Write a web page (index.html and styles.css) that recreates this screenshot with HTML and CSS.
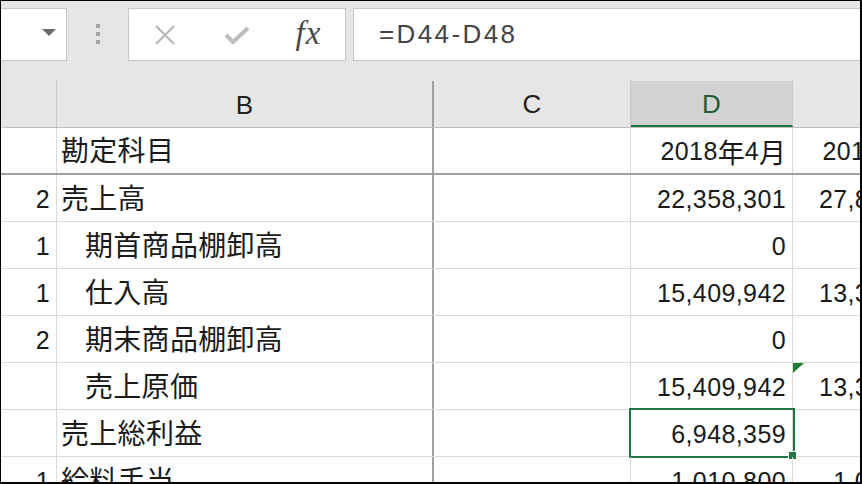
FILE: index.html
```html
<!DOCTYPE html>
<html lang="ja">
<head>
  <meta charset="UTF-8" />
  <title>売上総利益</title>
  <link rel="stylesheet" href="styles.css">
</head>
<body>

<div class="frame">
  <div class="toolbar">
    <div class="namebox"><span class="caret"></span></div>
    <div class="grip"><i></i><i></i><i></i></div>
    <div class="fxbox">
      <span class="fx-btn">
        <svg width="22" height="20" viewBox="0 0 22 20">
          <path d="M2 1 L20 19 M20 1 L2 19" stroke="#b4b4b4" stroke-width="2" fill="none"/>
        </svg>
      </span>
      <span class="fx-btn">
        <svg width="26" height="18" viewBox="0 0 26 18">
          <path d="M2 9 L9 16 L24 2" stroke="#bdbdbd" stroke-width="4" fill="none"/>
        </svg>
      </span>
      <span class="fx-btn fx-label">fx</span>
    </div>
    <div class="formula">=D44-D48</div>
  </div>

  <div class="sheet">
    <div class="row head">
      <div class="cell"></div>
      <div class="cell">B</div>
      <div class="cell">C</div>
      <div class="cell active">D</div>
      <div class="cell"></div>
    </div>

    <div class="row first">
      <div class="cell num"></div>
      <div class="cell label">勘定科目</div>
      <div class="cell"></div>
      <div class="cell num">2018<span class="kj">年</span>4<span class="kj">月</span></div>
      <div class="cell num">2018<span class="kj">年</span>5<span class="kj">月</span></div>
    </div>

    <div class="row">
      <div class="cell num">2</div>
      <div class="cell label">売上高</div>
      <div class="cell"></div>
      <div class="cell num">22,358,301</div>
      <div class="cell num">27,853,120</div>
    </div>

    <div class="row">
      <div class="cell num">1</div>
      <div class="cell label indent">期首商品棚卸高</div>
      <div class="cell"></div>
      <div class="cell num">0</div>
      <div class="cell num">0</div>
    </div>

    <div class="row">
      <div class="cell num">1</div>
      <div class="cell label indent">仕入高</div>
      <div class="cell"></div>
      <div class="cell num">15,409,942</div>
      <div class="cell num">13,316,508</div>
    </div>

    <div class="row">
      <div class="cell num">2</div>
      <div class="cell label indent">期末商品棚卸高</div>
      <div class="cell"></div>
      <div class="cell num">0</div>
      <div class="cell num">0</div>
    </div>

    <div class="row">
      <div class="cell num"></div>
      <div class="cell label indent">売上原価</div>
      <div class="cell"></div>
      <div class="cell num">15,409,942</div>
      <div class="cell num"><span class="warn"></span>13,316,508</div>
    </div>

    <div class="row">
      <div class="cell num"></div>
      <div class="cell label">売上総利益</div>
      <div class="cell"></div>
      <div class="cell num selected">6,948,359<span class="sel"><span class="handle"></span></span></div>
      <div class="cell num">0</div>
    </div>

    <div class="row">
      <div class="cell num">1</div>
      <div class="cell label">給料手当</div>
      <div class="cell"></div>
      <div class="cell num">1,010,800</div>
      <div class="cell num">1,010,800</div>
    </div>
  </div>
</div>

</body>
</html>
```

FILE: styles.css
```css
* { box-sizing: border-box; }

html, body {
  margin: 0;
  padding: 0;
  background: #000;
}

.frame {
  width: 862px;
  height: 484px;
  border-style: solid;
  border-color: #000;
  border-width: 1px 2px 2px 1px;
  background: #fff;
  overflow: hidden;
}

/* formula bar */
.toolbar {
  display: flex;
  align-items: flex-start;
  height: 79px;
  padding-top: 7px;
  background: #e6e6e6;
  font-family: "Liberation Sans", Arial, sans-serif;
}

.namebox {
  display: flex;
  align-items: center;
  justify-content: flex-end;
  width: 66px;
  height: 53px;
  padding-right: 10px;
  background: #fff;
  border: 1px solid #c6c6c6;
  border-left: none;
}

.caret {
  width: 0;
  height: 0;
  margin-top: -4px;
  border-left: 7px solid transparent;
  border-right: 7px solid transparent;
  border-top: 7px solid #6b6b6b;
}

.grip {
  display: flex;
  flex-direction: column;
  gap: 4px;
  margin: 16px 0 0 29px;
}

.grip i {
  display: block;
  width: 4px;
  height: 4px;
  background: #a6a6a6;
}

.fxbox {
  display: flex;
  width: 218px;
  height: 53px;
  margin-left: 28px;
  background: #fff;
  border: 1px solid #c6c6c6;
}

.fx-btn {
  display: flex;
  align-items: center;
  justify-content: center;
  width: 72px;
}

.fx-label {
  width: 71px;
  padding-bottom: 2px;
  font-family: "Liberation Serif", "Times New Roman", serif;
  font-style: italic;
  font-size: 33px;
  letter-spacing: 1px;
  color: #4a4a4a;
}

.formula {
  flex: 1;
  display: flex;
  align-items: center;
  height: 53px;
  margin-left: 7px;
  margin-right: -20px;
  padding-left: 25px;
  padding-bottom: 1px;
  background: #fff;
  border: 1px solid #c6c6c6;
  font-size: 26px;
  letter-spacing: 2.4px;
  color: #444;
}

/* grid */
.row {
  display: grid;
  grid-template-columns: 56px 377px 197px 162px 162px;
  height: 47px;
  border-bottom: 1px solid #dadada;
}

.cell {
  display: flex;
  align-items: center;
  position: relative;
  border-right: 1px solid #dadada;
  color: #1a1a1a;
  white-space: nowrap;
}

.cell:nth-child(2) {
  border-right: 2px solid #a0a0a0;
}

.row.head {
  height: 48px;
  background: #e6e6e6;
  border-bottom: 1px solid #bfbfbf;
}

.row.head .cell {
  justify-content: center;
  border-right-color: #c8c8c8;
  font-family: "Liberation Sans", Arial, sans-serif;
  font-size: 26px;
  line-height: 26px;
  color: #222;
  padding-top: 1px;
}

.row.head .cell:nth-child(2) {
  border-right-color: #a0a0a0;
  margin-top: 1px;
}

.row.head .cell.active {
  background: #d2d2d2;
  color: #1f5e3b;
  margin-top: 1px;
  border-bottom: 2px solid #217346;
}

.row.first {
  border-bottom: 2px solid #a0a0a0;
}

.label {
  padding-left: 4px;
  font-family: "Noto Sans CJK JP", sans-serif;
  font-size: 28px;
  line-height: 28px;
  letter-spacing: 0.3px;
  padding-bottom: 3px;
}

.label.indent {
  padding-left: 28px;
}

.num {
  justify-content: flex-end;
  padding-right: 6px;
  padding-top: 2px;
  font-family: "Liberation Sans", Arial, "Noto Sans CJK JP", sans-serif;
  font-size: 25px;
  line-height: 25px;
  letter-spacing: 0.4px;
}

.kj {
  font-family: "Noto Sans CJK JP", sans-serif;
  font-size: 27px;
  letter-spacing: 0;
}

.warn {
  position: absolute;
  left: 0;
  top: 0;
  width: 0;
  height: 0;
  border-top: 10px solid #1e7b34;
  border-right: 11px solid transparent;
}

.sel {
  position: absolute;
  left: -2px;
  top: -2px;
  width: 166px;
  height: 50px;
  border: 2px solid #217346;
}

.handle {
  position: absolute;
  right: -3px;
  bottom: -3px;
  width: 7px;
  height: 7px;
  background: #217346;
  outline: 1px solid #fff;
}
```
